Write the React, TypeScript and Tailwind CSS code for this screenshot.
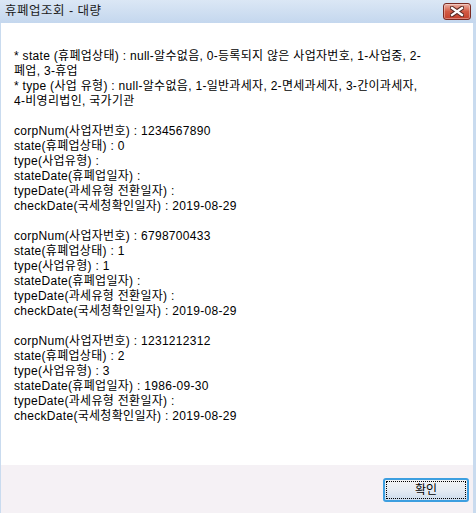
const lines: string[] = [
  "* state (휴폐업상태) : null-알수없음, 0-등록되지 않은 사업자번호, 1-사업중, 2-",
  "폐업, 3-휴업",
  "* type (사업 유형) : null-알수없음, 1-일반과세자, 2-면세과세자, 3-간이과세자,",
  "4-비영리법인, 국가기관",
  "",
  "corpNum(사업자번호) : 1234567890",
  "state(휴폐업상태) : 0",
  "type(사업유형) : ",
  "stateDate(휴폐업일자) : ",
  "typeDate(과세유형 전환일자) : ",
  "checkDate(국세청확인일자) : 2019-08-29",
  "",
  "corpNum(사업자번호) : 6798700433",
  "state(휴폐업상태) : 1",
  "type(사업유형) : 1",
  "stateDate(휴폐업일자) : ",
  "typeDate(과세유형 전환일자) : ",
  "checkDate(국세청확인일자) : 2019-08-29",
  "",
  "corpNum(사업자번호) : 1231212312",
  "state(휴폐업상태) : 2",
  "type(사업유형) : 3",
  "stateDate(휴폐업일자) : 1986-09-30",
  "typeDate(과세유형 전환일자) : ",
  "checkDate(국세청확인일자) : 2019-08-29",
]

function CloseButton() {
  return (
    <div className="mt-[3px] mr-[5px] flex h-[17px] w-[28px] items-center justify-center rounded-[3px] border border-[#7a2a22] bg-gradient-to-b from-[#eab0a4] via-[#d25a44] to-[#c4402c] shadow-[inset_0_0_0_1px_rgba(255,255,255,0.35)]">
      <svg width="14" height="11" viewBox="0 0 14 11">
        <path d="M2 2 L12 9 M12 2 L2 9" stroke="#5a2a24" strokeWidth="4.5" strokeLinecap="square" />
        <path d="M2 2 L12 9 M12 2 L2 9" stroke="#ffffff" strokeWidth="2.2" strokeLinecap="square" />
      </svg>
    </div>
  )
}

export default function App() {
  return (
    <div
      className="flex h-[513px] w-[476px] flex-col bg-[#c9dbef] text-[12px] text-black"
      style={{ fontFamily: '"Liberation Sans", "Noto Sans CJK KR", sans-serif' }}
    >
      <div className="flex h-[23px] shrink-0 items-start justify-between bg-gradient-to-b from-[#dbe7f5] to-[#c4d7ee]">
        <span className="pl-[5px] pt-[4px] text-[12.5px] leading-[15px] tracking-[0.5px] text-[#1b1b1b]">휴폐업조회 - 대량</span>
        <CloseButton />
      </div>
      <div className="ml-[1px] mr-[3px] flex flex-1 flex-col bg-white">
        <div className="flex-1 pl-[13px] pt-[26px] tracking-[0.3px]">
          {lines.map((line, i) => (
            <div key={i} className="h-[15px] whitespace-pre leading-[15px]">
              {line}
            </div>
          ))}
        </div>
        <div className="flex h-[48px] shrink-0 items-start justify-end bg-[#f5f1f5] pr-[4px] pt-[13px]">
          <button className="flex h-[24px] w-[86px] items-center justify-center rounded-[3px] border-2 border-[#3d9fe0] bg-gradient-to-b from-[#f4f4f4] via-[#e6ecf3] to-[#cddcec] p-[1px]">
            <span className="flex h-full w-full items-center justify-center border border-dotted border-black leading-none">
              확인
            </span>
          </button>
        </div>
      </div>
    </div>
  )
}
